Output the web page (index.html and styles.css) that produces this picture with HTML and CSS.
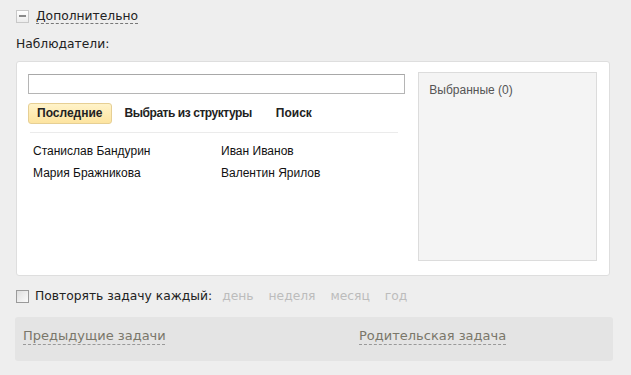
FILE: index.html
```html
<!DOCTYPE html>
<html>
<head>
<meta charset="utf-8">
<link rel="stylesheet" href="styles.css">
</head>
<body>
<div class="page">
  <div class="toggle">
    <span class="minus"><span class="minus-bar"></span></span>
    <span class="dashed">Дополнительно</span>
  </div>
  <div class="label">Наблюдатели:</div>
  <div class="card">
    <div class="left">
      <div class="input"></div>
      <div class="tabs">
        <span class="tab active">Последние</span>
        <span class="tab tight">Выбрать из структуры</span>
        <span class="tab search">Поиск</span>
      </div>
      <div class="sep"></div>
      <div class="names">
        <span>Станислав Бандурин</span>
        <span>Иван Иванов</span>
        <span>Мария Бражникова</span>
        <span>Валентин Ярилов</span>
      </div>
    </div>
    <div class="selected">Выбранные (0)</div>
  </div>
  <div class="repeat">
    <span class="checkbox"></span>
    <span class="repeat-label">Повторять задачу каждый:</span>
    <span class="period">день</span>
    <span class="period">неделя</span>
    <span class="period">месяц</span>
    <span class="period">год</span>
  </div>
  <div class="links">
    <span class="link first">Предыдущие задачи</span>
    <span class="link">Родительская задача</span>
  </div>
</div>
</body>
</html>
```
FILE: styles.css
```css
html, body {
  margin: 0;
  padding: 0;
  background: #eeeeee;
}
.page {
  width: 631px;
  height: 375px;
  padding: 7px 0 0 16px;
  box-sizing: border-box;
  font-family: "DejaVu Sans", sans-serif;
  font-size: 12.3px;
  color: #222;
}
.toggle {
  display: flex;
  align-items: center;
  gap: 7px;
  height: 18px;
}
.minus {
  width: 11px;
  height: 11px;
  border: 1px solid #c8c8c8;
  background: linear-gradient(#ffffff, #ececec);
  display: flex;
  align-items: center;
  justify-content: center;
}
.minus-bar {
  width: 7px;
  height: 2px;
  background: #8a8a8a;
}
.dashed {
  border-bottom: 1px dashed #777;
  line-height: 14px;
}
.label {
  margin-top: 11px;
  line-height: 16px;
}
.card {
  margin-top: 9px;
  width: 594px;
  height: 215px;
  box-sizing: border-box;
  background: #fff;
  border: 1px solid #dedede;
  border-radius: 3px;
  padding: 10px 12px 14px 11px;
  display: flex;
  gap: 13px;
}
.left {
  width: 378px;
  padding-top: 2px;
  font-family: "Liberation Sans", Arial, sans-serif;
}
.input {
  height: 20px;
  box-sizing: border-box;
  border: 1px solid #b5b5b5;
  border-top-color: #a8a8a8;
}
.tabs {
  display: flex;
  margin-top: 9px;
  align-items: center;
}
.tab {
  font-weight: bold;
  font-size: 12px;
  color: #222;
  line-height: 19px;
  padding: 0 8px;
  border: 1px solid transparent;
  border-radius: 3px;
}
.tab.active {
  padding: 0 8px;
  background: linear-gradient(#fff3c9, #fde4a0);
  border-color: #e6cf94;
  margin-right: 4px;
}
.tab.tight {
  letter-spacing: -0.45px;
}
.tab.search {
  margin-left: 6px;
}
.sep {
  margin: 8px 7px 0 2px;
  height: 1px;
  background: #ebebeb;
}
.names {
  display: grid;
  grid-template-columns: 188px auto;
  row-gap: 8px;
  padding: 11px 0 0 5px;
  font-size: 12px;
  line-height: 14px;
  color: #111;
}
.selected {
  width: 179px;
  height: 189px;
  box-sizing: border-box;
  background: #f4f4f4;
  border: 1px solid #dcdcdc;
  padding: 10px 10px;
  font-family: "Liberation Sans", Arial, sans-serif;
  font-size: 12px;
  color: #555;
}
.repeat {
  display: flex;
  align-items: center;
  margin-top: 12px;
  height: 16px;
}
.checkbox {
  width: 11px;
  height: 11px;
  border: 1px solid #9a9a9a;
  background: linear-gradient(135deg, #dedede, #fbfbfb);
  margin-right: 6px;
}
.repeat-label {
  margin-right: 10px;
}
.period {
  color: #bcbcbc;
  margin-right: 15px;
}
.links {
  margin-top: 13px;
  width: 598px;
  margin-left: -1px;
  height: 44px;
  box-sizing: border-box;
  background: #e4e4e4;
  border-radius: 3px;
  padding: 11px 0 0 8px;
  display: flex;
  font-size: 13px;
}
.link {
  color: #7a776a;
  text-decoration: underline dashed #999;
  text-underline-offset: 4px;
  text-decoration-thickness: 1px;
}
.link.first {
  width: 336px;
  flex: none;
}
```
